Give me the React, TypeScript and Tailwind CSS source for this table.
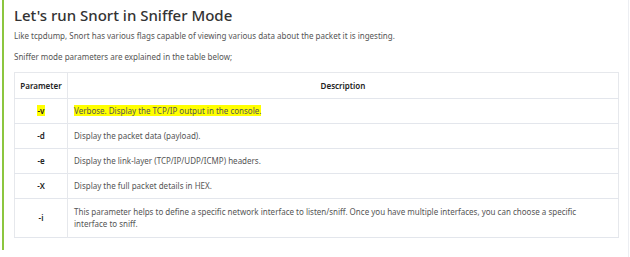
import React from "react";

const rows = [
  { flag: "-v", desc: "Verbose. Display the TCP/IP output in the console.", mark: true },
  { flag: "-d", desc: "Display the packet data (payload)." },
  { flag: "-e", desc: "Display the link-layer (TCP/IP/UDP/ICMP) headers." },
  { flag: "-X", desc: "Display the full packet details in HEX." },
  {
    flag: "-i",
    desc: "This parameter helps to define a specific network interface to listen/sniff. Once you have multiple interfaces, you can choose a specific interface to sniff.",
  },
];

export default function App() {
  return (
    <div className="relative flex h-[257px] w-[630px] overflow-hidden bg-white font-['Noto_Sans',sans-serif] text-[#555]">
      <div className="ml-[2px] h-[250px] w-[2px] shrink-0 bg-[#8cc63f]" />
      <main className="w-[605px] pl-[10px] pt-[4px]">
        <h1 className="text-[15px] font-medium leading-[22px] text-[#333]">Let's run Snort in Sniffer Mode</h1>
        <p className="mt-[4px] text-[8px] leading-[12px]">
          Like tcpdump, Snort has various flags capable of viewing various data about the packet it is ingesting.
        </p>
        <p className="mt-[9px] text-[8px] leading-[12px]">Sniffer mode parameters are explained in the table below;</p>
        <table className="mt-[9px] w-[605px] border-collapse border border-[#e6e8ec] text-[8px]">
          <thead>
            <tr className="h-[26px] border-b border-[#e3e6ec]">
              <th className="w-[53px] border-r border-[#e6e8ec] font-semibold text-[#222]">Parameter</th>
              <th className="font-semibold text-[#222]">Description</th>
            </tr>
          </thead>
          <tbody>
            {rows.map((r) => (
              <tr key={r.flag} className="border-b border-[#e3e6ec]">
                <td className={`border-r border-[#e6e8ec] text-center font-semibold text-[#222] ${r.flag === "-i" ? "h-[39px]" : "h-[25px]"}`}>
                  {r.mark ? <mark className="bg-[#ffff00] px-[1px] text-[#222]">{r.flag}</mark> : r.flag}
                </td>
                <td className="py-[6px] pl-[6px] pr-[22px] leading-[12px]">
                  {r.mark ? <mark className="bg-[#ffff00] text-[#555]">{r.desc}</mark> : r.desc}
                </td>
              </tr>
            ))}
          </tbody>
        </table>
      </main>
      <div className="absolute right-[1px] top-0 h-full w-px bg-[#eceef2]" />
    </div>
  );
}
